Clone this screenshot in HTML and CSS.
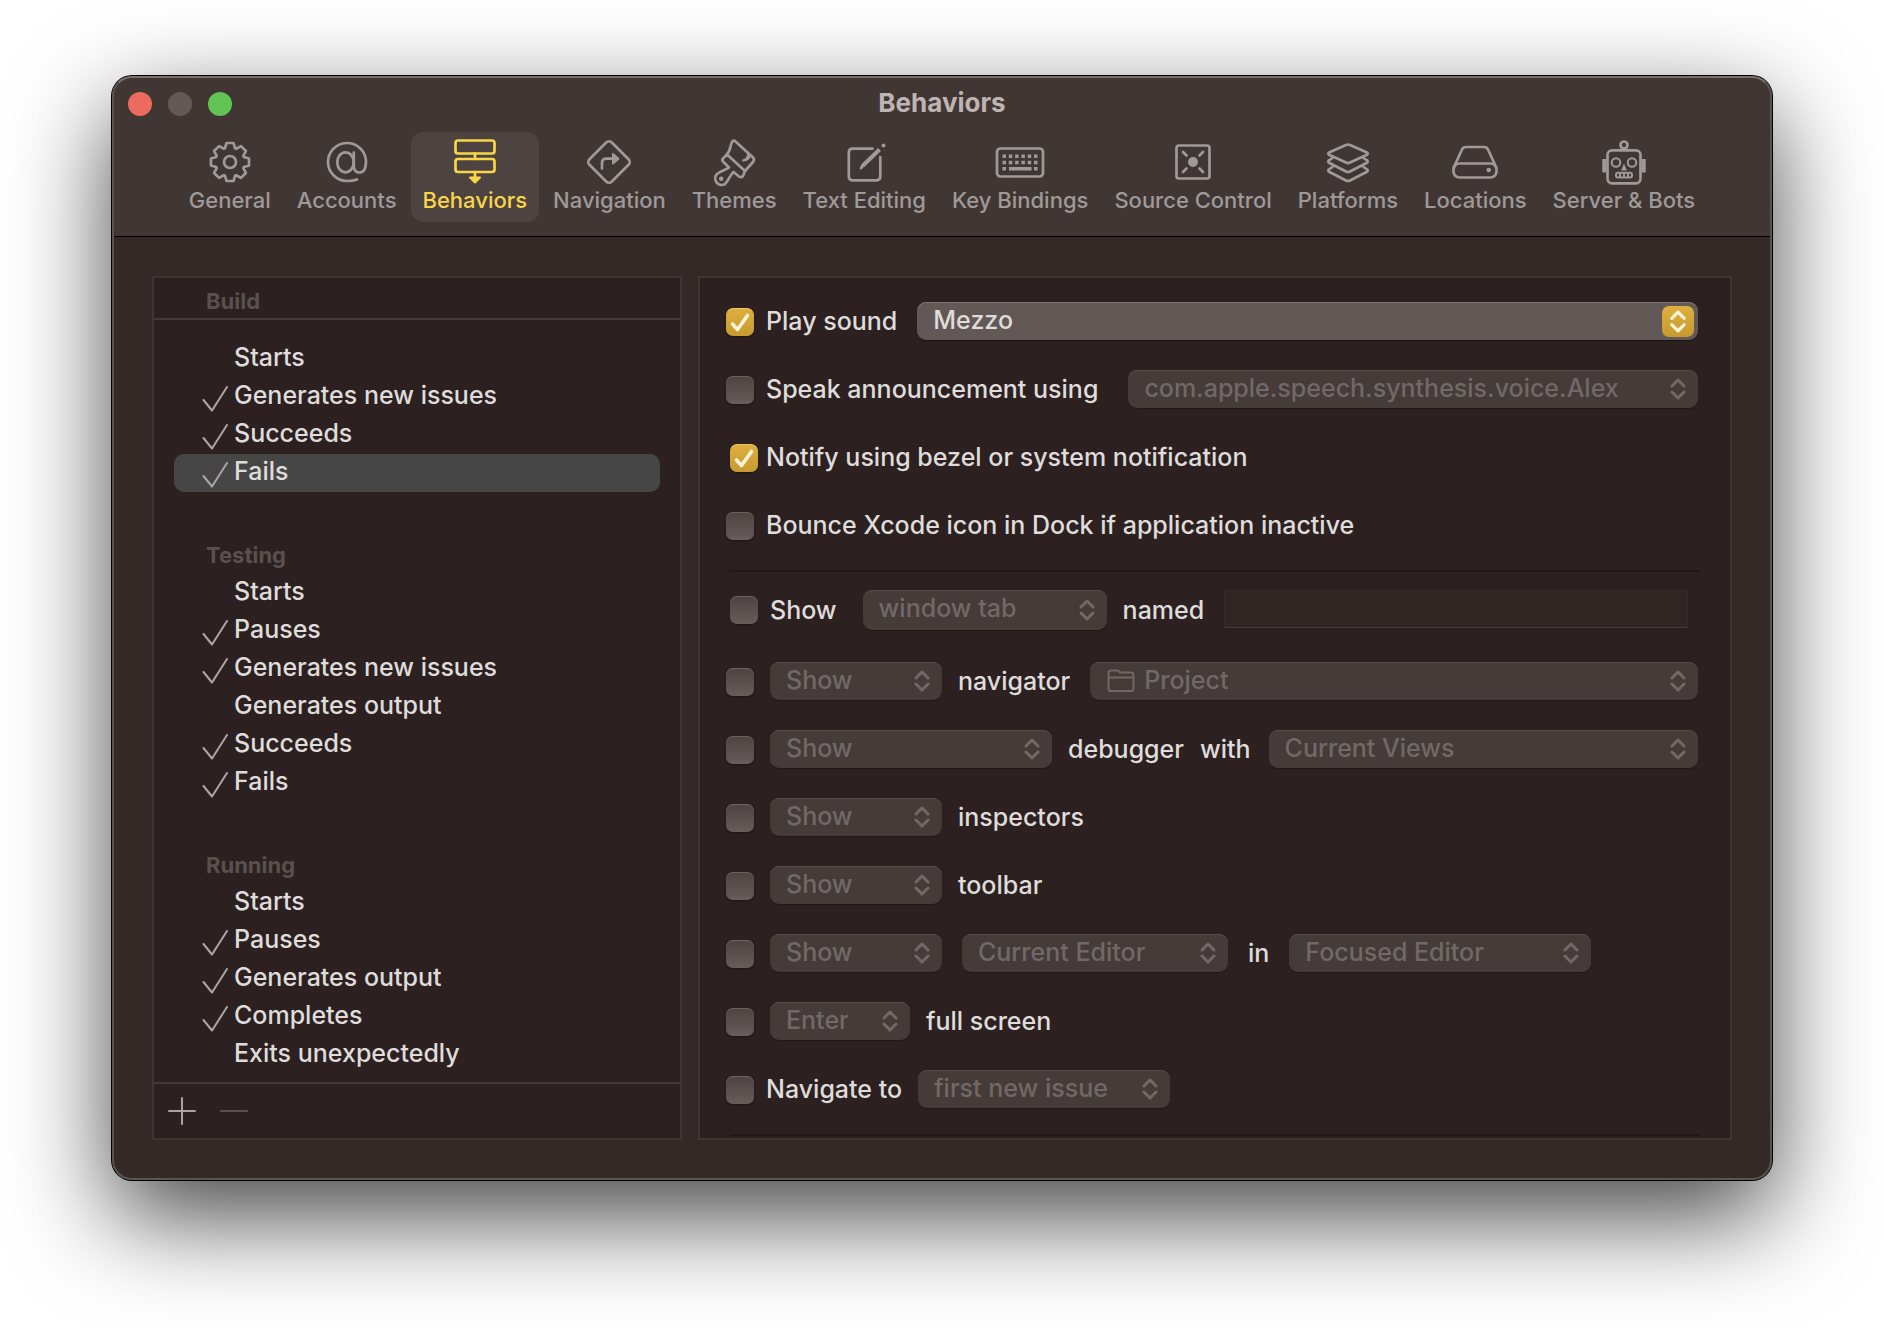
FILE: index.html
```html
<!DOCTYPE html>
<html lang="en">
<head>
<meta charset="utf-8">
<title>Behaviors</title>
<link rel="stylesheet" href="styles.css">
</head>
<body>
<svg class="sprite" aria-hidden="true">
  <symbol id="updown" viewBox="0 0 16 24"><path d="M2 9 8 3l6 6M2 15l6 6 6-6"/></symbol>
  <symbol id="tick" viewBox="0 0 26 26"><path d="M1.500 14 10 24.500 25 1"/></symbol>
</svg>
<main class="window">
  <header class="header">
    <div class="titlebar">
      <div class="lights">
        <button class="light close" type="button" aria-label="Close"></button>
        <button class="light minimize" type="button" aria-label="Minimize" disabled></button>
        <button class="light expand" type="button" aria-label="Zoom"></button>
      </div>
      <h1 class="title">Behaviors</h1>
    </div>
    <nav class="toolbar">
      <button class="tool" type="button">
        <svg class="tool-icon" viewBox="-25 -25 50 50"><path d="M-5-13.800-3.500-19H3.500L5-13.800 6.200-13.300 10.960-15.900 15.900-10.960 13.300-6.200 13.800-5 19-3.500V3.500L13.800 5 13.300 6.200 15.900 10.960 10.960 15.900 6.200 13.300 5 13.800 3.500 19H-3.500L-5 13.800-6.200 13.300-10.960 15.900-15.900 10.960-13.300 6.200-13.800 5-19 3.500V-3.500L-13.800-5-13.300-6.200-15.900-10.960-10.960-15.900-6.200-13.300Z"/><circle r="6"/></svg>
        <span>General</span>
      </button>
      <button class="tool" type="button">
        <svg class="tool-icon" viewBox="-25 -25 50 50"><path d="M10 17.500C7 18.700 3.500 19 0 19A19 19 0 1 1 19-1C19 7 16.500 10.500 12.500 10.500 9 10.500 6.800 8 6.800 4V-9.500"/><ellipse cx="-1.500" cy=".3" rx="8.200" ry="10"/></svg>
        <span>Accounts</span>
      </button>
      <button class="tool active" type="button" aria-current="page">
        <svg class="tool-icon" viewBox="0 0 50 50"><rect x="5.500" y="3.500" width="39" height="13" rx="2.500"/><rect x="5.500" y="22" width="39" height="13" rx="2.500"/><path d="M25 16.500V22M25 35v5"/><path class="solid" d="M20 40.500H30L25 45.500Z"/></svg>
        <span>Behaviors</span>
      </button>
      <button class="tool" type="button">
        <svg class="tool-icon" viewBox="-25 -25 50 50"><rect x="-15.800" y="-15.800" width="31.600" height="31.600" rx="4" transform="rotate(45)"/><path d="M-7 6.500V1Q-7-3.300-2.500-3.300H4"/><path class="solid" d="M4-8V1.500L9.500-3.200Z"/></svg>
        <span>Navigation</span>
      </button>
      <button class="tool" type="button">
        <svg class="tool-icon" viewBox="-25 -25 50 50"><path d="M-7-8C-3.500-11-4-16-2-20Q-.5-22.500 1.500-20.500L19-4.500Q21-2.500 19 0L11 9"/><path d="M-7-7.500-11-3.500Q-12.500-2-11-.5L-5 5.500C-8 8-14 9-17.500 12.500A6.500 6.500 0 0 0-9 22C-5 18-4 13-.5 10L5 14.500Q7 16 9 14L11 9-7-7.500"/><circle class="dot" cx="-12.800" cy="16.800" r="2.300"/><path class="solid" d="M16-6Q14-1.500 9-1.500 14-3 14-8Z"/></svg>
        <span>Themes</span>
      </button>
      <button class="tool" type="button">
        <svg class="tool-icon" viewBox="-25 -25 50 50"><path d="M8.500-13.300H-11.500Q-15.200-13.300-15.200-9.500V14.500Q-15.200 18.300-11.500 18.300H12.500Q16.300 18.300 16.300 14.500V-5"/><path class="pen" d="M-1.500 4 15.500-12.500"/><path d="M-3 6.200-1 3"/><circle class="dot" cx="19.500" cy="-16.500" r="2"/></svg>
        <span>Text Editing</span>
      </button>
      <button class="tool" type="button">
        <svg class="tool-icon" viewBox="-25 -25 50 50"><rect x="-23" y="-13.500" width="46" height="28" rx="3.500"/><path class="keys" d="M-17.500-5.700H19M-17.500.5H19"/><path class="bar" d="M-17.500 6.700h3.500M-11 6.700H11.500M14 6.700H17.500"/></svg>
        <span>Key Bindings</span>
      </button>
      <button class="tool" type="button">
        <svg class="tool-icon" viewBox="-25 -25 50 50"><rect x="-16.500" y="-16.500" width="33" height="33" rx="2.500"/><circle class="dot" r="5"/><path d="M-10-10-6.500-6.500M10-10 6.500-6.500M-10 10-6.500 6.500M10 10 6.500 6.500"/></svg>
        <span>Source Control</span>
      </button>
      <button class="tool" type="button">
        <svg class="tool-icon" viewBox="-25 -25 50 50"><path d="M-2-17Q0-18 2-17L18.500-9.800Q21-8.500 18.500-7L2 .6Q0 1.500-2 .6L-18.500-7Q-21-8.500-18.500-9.800Z"/><path d="M-15.500-4-18.500-2Q-21-.5-18.500 1L-2 9.500Q0 10.500 2 9.500L18.500 1Q21-.5 18.500-2L15.500-4"/><path d="M-15.500 5-18.500 7Q-21 8.500-18.500 10L-2 18.500Q0 19.500 2 18.500L18.500 10Q21 8.500 18.500 7L15.500 5"/></svg>
        <span>Platforms</span>
      </button>
      <button class="tool" type="button">
        <svg class="tool-icon" viewBox="-25 -25 50 50"><path d="M-21 5-13-12.500Q-12-15-9-15H9Q12-15 13-12.500L21 5"/><rect x="-21.500" y="1.500" width="43" height="14" rx="6"/><circle class="dot" cx="13.700" cy="8" r="2.300"/></svg>
        <span>Locations</span>
      </button>
      <button class="tool" type="button">
        <svg class="tool-icon" viewBox="-25 -25 50 50"><circle cx="0" cy="-17" r="3.500"/><path class="solid" d="M-4-12Q0-15 4-12Z"/><rect x="-16.500" y="-11.700" width="33" height="33" rx="4.500"/><path class="ears" d="M-19.700-3V10.500M19.700-3V10.500"/><circle class="thin" cx="-8" cy=".5" r="4.300"/><circle class="thin" cx="8" cy=".5" r="4.300"/><path class="dot" d="M0 1.500 3 8.500H-3Z"/><rect class="thin" x="-8" y="10.800" width="16" height="4.600" rx="2"/><path class="thin" d="M-4 11v4M0 11v4M4 11v4"/></svg>
        <span>Server &amp; Bots</span>
      </button>
    </nav>
  </header>

  <div class="content">
    <aside class="panel sidebar">
      <h2 class="group-title pinned">Build</h2>
      <div class="groups">
        <ul class="events">
          <li class="event">Starts</li>
          <li class="event"><svg class="tick"><use href="#tick"/></svg>Generates new issues</li>
          <li class="event"><svg class="tick"><use href="#tick"/></svg>Succeeds</li>
          <li class="event selected"><svg class="tick"><use href="#tick"/></svg>Fails</li>
        </ul>
        <h2 class="group-title">Testing</h2>
        <ul class="events">
          <li class="event">Starts</li>
          <li class="event"><svg class="tick"><use href="#tick"/></svg>Pauses</li>
          <li class="event"><svg class="tick"><use href="#tick"/></svg>Generates new issues</li>
          <li class="event">Generates output</li>
          <li class="event"><svg class="tick"><use href="#tick"/></svg>Succeeds</li>
          <li class="event"><svg class="tick"><use href="#tick"/></svg>Fails</li>
        </ul>
        <h2 class="group-title">Running</h2>
        <ul class="events">
          <li class="event">Starts</li>
          <li class="event"><svg class="tick"><use href="#tick"/></svg>Pauses</li>
          <li class="event"><svg class="tick"><use href="#tick"/></svg>Generates output</li>
          <li class="event"><svg class="tick"><use href="#tick"/></svg>Completes</li>
          <li class="event">Exits unexpectedly</li>
        </ul>
      </div>
      <div class="actions">
        <button class="action" type="button" aria-label="Add behavior"><svg viewBox="0 0 28 28"><path d="M1 14H27M14 1V27"/></svg></button>
        <button class="action" type="button" aria-label="Remove behavior" disabled><svg viewBox="0 0 28 28"><path d="M1 14H27"/></svg></button>
      </div>
    </aside>

    <form class="panel settings">
      <div class="row">
        <input class="check" type="checkbox" id="play" checked>
        <label class="label" for="play">Play sound</label>
        <span class="popup enabled fill after-label"><select aria-label="Sound"><option>Mezzo</option></select><svg><use href="#updown"/></svg></span>
      </div>
      <div class="row">
        <input class="check" type="checkbox" id="speak">
        <label class="label" for="speak">Speak announcement using</label>
        <span class="popup fill after-speak"><select aria-label="Voice" disabled><option>com.apple.speech.synthesis.voice.Alex</option></select><svg><use href="#updown"/></svg></span>
      </div>
      <div class="row">
        <input class="check inset" type="checkbox" id="notify" checked>
        <label class="label" for="notify">Notify using bezel or system notification</label>
      </div>
      <div class="row">
        <input class="check" type="checkbox" id="bounce">
        <label class="label" for="bounce">Bounce Xcode icon in Dock if application inactive</label>
      </div>
      <hr class="rule">
      <div class="row tab-row">
        <input class="check inset" type="checkbox" id="show-tab">
        <label class="label wide-start" for="show-tab">Show</label>
        <span class="popup tab-kind"><select aria-label="Window kind" disabled><option>window tab</option></select><svg><use href="#updown"/></svg></span>
        <label class="label trailing" for="tab-name">named</label>
        <input class="name" type="text" id="tab-name" disabled>
      </div>
      <div class="row">
        <input class="check" type="checkbox" id="navigator">
        <span class="popup verb"><select aria-label="Navigator action" disabled><option>Show</option></select><svg><use href="#updown"/></svg></span>
        <label class="label trailing" for="navigator">navigator</label>
        <span class="popup fill with-icon after-trailing"><select aria-label="Navigator" disabled><option>Project</option></select><svg><use href="#updown"/></svg><svg class="folder" viewBox="0 0 28 24"><path d="M1.500 5V19.500Q1.500 22 4 22H24Q26.500 22 26.500 19.500V6Q26.500 3.500 24 3.500H13L10.500 1.500H4Q1.500 1.500 1.500 4ZM1.500 8.500H26.500"/></svg></span>
      </div>
      <div class="row">
        <input class="check" type="checkbox" id="debugger">
        <span class="popup verb-wide"><select aria-label="Debugger action" disabled><option>Show</option></select><svg><use href="#updown"/></svg></span>
        <label class="label trailing" for="debugger">debugger</label>
        <label class="label trailing" for="views">with</label>
        <span class="popup fill after-with"><select id="views" disabled><option>Current Views</option></select><svg><use href="#updown"/></svg></span>
      </div>
      <div class="row">
        <input class="check" type="checkbox" id="inspectors">
        <span class="popup verb"><select aria-label="Inspectors action" disabled><option>Show</option></select><svg><use href="#updown"/></svg></span>
        <label class="label trailing" for="inspectors">inspectors</label>
      </div>
      <div class="row">
        <input class="check" type="checkbox" id="toolbar">
        <span class="popup verb"><select aria-label="Toolbar action" disabled><option>Show</option></select><svg><use href="#updown"/></svg></span>
        <label class="label trailing" for="toolbar">toolbar</label>
      </div>
      <div class="row">
        <input class="check" type="checkbox" id="editor" aria-label="Editor">
        <span class="popup verb"><select aria-label="Editor action" disabled><option>Show</option></select><svg><use href="#updown"/></svg></span>
        <span class="popup editor after-trailing"><select aria-label="Editor kind" disabled><option>Current Editor</option></select><svg><use href="#updown"/></svg></span>
        <label class="label after-label" for="target">in</label>
        <span class="popup target after-label"><select id="target" disabled><option>Focused Editor</option></select><svg><use href="#updown"/></svg></span>
      </div>
      <div class="row">
        <input class="check" type="checkbox" id="full">
        <span class="popup verb-short"><select aria-label="Full screen action" disabled><option>Enter</option></select><svg><use href="#updown"/></svg></span>
        <label class="label trailing" for="full">full screen</label>
      </div>
      <div class="row">
        <input class="check" type="checkbox" id="navigate">
        <label class="label" for="navigate">Navigate to</label>
        <span class="popup issue trailing"><select aria-label="Destination" disabled><option>first new issue</option></select><svg><use href="#updown"/></svg></span>
      </div>
      <hr class="rule">
    </form>
  </div>
</main>
</body>
</html>
```
FILE: styles.css
```css
* {
  box-sizing: border-box;
}

body {
  margin: 0;
  padding: 76px 112px 148px;
  background: #fff;
  color: #dfdcdb;
  font: 500 25px/38px Inter, "Liberation Sans", sans-serif;
}

button, input, select {
  margin: 0;
  padding: 0;
  border: 0;
  background: none;
  color: inherit;
  font: inherit;
}

h1, h2, ul {
  margin: 0;
  padding: 0;
  list-style: none;
}

svg {
  fill: none;
  stroke: currentColor;
  stroke-linecap: round;
  stroke-linejoin: round;
}

.sprite {
  display: none;
}

.window {
  position: relative;
  border-radius: 20px;
  background: #342927;
  box-shadow: 0 0 0 1px #000, 0 36px 100px rgba(0, 0, 0, .74);
}

/* Light rim drawn over the header and content edges */
.window::after {
  content: "";
  position: absolute;
  inset: 0;
  border: 2px solid #5c5250;
  border-top-color: #78716d;
  border-radius: 20px;
  pointer-events: none;
}

.header {
  padding-bottom: 14px;
  border-bottom: 1px solid #000;
  border-radius: 20px 20px 0 0;
  background: #403735;
}

.titlebar {
  display: grid;
  grid-template-columns: 1fr auto 1fr;
  align-items: center;
  height: 56px;
  padding: 0 16px;
}

.lights {
  display: flex;
  gap: 16px;
}

.light {
  width: 24px;
  height: 24px;
  border-radius: 50%;
}

.close { background: #ed6a5e; }
.minimize { background: #635a58; }
.expand { background: #61c554; }

.title {
  padding-bottom: 2px;
  color: #bfb4b2;
  font-size: 26px;
  font-weight: 700;
}

.toolbar {
  display: flex;
  justify-content: center;
  gap: 2px;
}

.tool {
  display: flex;
  flex-direction: column;
  align-items: center;
  height: 90px;
  padding: 5px 12px 9px;
  border-radius: 12px;
  color: #9f9998;
  font-size: 22px;
  line-height: 26px;
  white-space: nowrap;
}

.tool.active {
  background: #4d4442;
  color: #f9d548;
}

.tool-icon {
  width: 50px;
  height: 50px;
  stroke-width: 2.7;
}

.solid {
  fill: currentColor;
  stroke-width: 2;
}

.dot {
  fill: currentColor;
  stroke: none;
}

.pen { stroke-width: 4; stroke-linecap: butt; }
.keys { stroke-width: 3.5; stroke-linecap: butt; stroke-dasharray: 3.5 2.8; }
.bar { stroke-width: 3.5; stroke-linecap: butt; }
.ears { stroke-width: 4; stroke-linecap: butt; }
.thin { stroke-width: 2; }

.content {
  display: grid;
  grid-template-columns: 530fr 1034fr;
  gap: 16px;
  padding: 39px 40px 40px;
}

.panel {
  min-width: 0;
  overflow: hidden;
  border: 2px solid #3f3533;
  background: #2c2120;
}

.sidebar {
  display: flex;
  flex-direction: column;
}

.groups {
  flex: 1;
  padding: 20px 20px 8px;
}

.group-title {
  height: 38px;
  margin-top: 44px;
  padding-left: 32px;
  color: #5a504e;
  font-size: 22px;
  font-weight: 700;
}

.group-title.pinned {
  height: 42px;
  margin: 0;
  padding: 4px 0 0 52px;
  border-bottom: 2px solid #433937;
}

.event {
  display: grid;
  grid-template-columns: 26px 1fr;
  column-gap: 6px;
  height: 38px;
  padding-left: 28px;
  border-radius: 10px;
  line-height: 34px;
}

.event:not(:has(.tick)) {
  padding-left: 60px;
  grid-template-columns: 1fr;
}

.event.selected {
  background: #464646;
}

.tick {
  width: 26px;
  height: 26px;
  margin-top: 8px;
  color: #aca6a4;
  stroke-width: 2;
}

.actions {
  display: flex;
  gap: 24px;
  height: 56px;
  padding: 13px 14px;
  border-top: 2px solid #433937;
}

.action {
  width: 28px;
  height: 28px;
  color: #aaa4a2;
}

.action svg {
  display: block;
  stroke-width: 2;
}

.action:disabled {
  color: #5a504e;
}

.settings {
  display: flex;
  flex-direction: column;
  padding: 24px 30px 2px 26px;
}

.row {
  display: flex;
  height: 38px;
  padding-right: 2px;
}

.row + .row {
  margin-top: 30px;
}

.row.tab-row + .row {
  margin-top: 34px;
}

.row.tab-row {
  padding-right: 12px;
  line-height: 40px;
}

.rule {
  flex: none;
  height: 2px;
  margin: 26px 0 18px 4px;
  border: 0;
  background: #211817;
}

.rule:last-child {
  margin-bottom: 0;
}

.check {
  appearance: none;
  flex: none;
  width: 28px;
  height: 28px;
  margin: 6px 16px 0 0;
  border-radius: 7px;
  background: linear-gradient(#4c4341, #675e5c);
  box-shadow: inset 0 1px #6b6260, 0 1px 2px rgba(0, 0, 0, .4);
}

.check.inset {
  margin-left: 4px;
  margin-right: 12px;
}

.check:checked {
  background: url("data:image/svg+xml,%3Csvg xmlns='http://www.w3.org/2000/svg' viewBox='0 0 28 28'%3E%3Cpath d='M6.500 16 11.500 21.500 21.500 7.500' fill='none' stroke='%23fdf3d8' stroke-width='3.600' stroke-linecap='round' stroke-linejoin='round'/%3E%3C/svg%3E"), linear-gradient(#dfb03f, #c79a30);
  box-shadow: inset 0 1px #ecc768, 0 1px 2px rgba(0, 0, 0, .4);
}

.label {
  margin-left: -4px;
  white-space: nowrap;
}

.label.wide-start {
  margin-left: 0;
}

.trailing {
  margin-left: 16px;
}

.after-label,
.after-trailing {
  margin-left: 20px;
}

.after-with {
  margin-left: 18px;
}

.after-speak {
  margin-left: 30px;
}

.popup {
  display: grid;
  grid-template-columns: minmax(0, 1fr);
  flex: none;
  border-radius: 9px;
  background: #453b39;
  box-shadow: inset 0 1px #564c4a, 0 1px 1px rgba(0, 0, 0, .3);
  color: #716967;
}

.popup.fill {
  flex: 1;
  min-width: 0;
}

.popup > * {
  grid-area: 1 / 1;
}

.popup select {
  appearance: none;
  height: 35px;
  padding: 0 44px 0 16px;
  line-height: 34px;
  opacity: 1;
}

.popup svg {
  align-self: center;
  justify-self: end;
  width: 16px;
  height: 24px;
  margin-right: 12px;
  stroke-width: 3;
  pointer-events: none;
}

.popup.with-icon select {
  padding-left: 54px;
}

.popup .folder {
  justify-self: start;
  width: 28px;
  margin-left: 17px;
  stroke-width: 2;
}

.popup.enabled {
  background: #625956;
  box-shadow: inset 0 1px #7d7471, 0 1px 1px rgba(0, 0, 0, .4);
  color: #dfdcdb;
}

.popup.enabled svg {
  width: 32px;
  height: 31px;
  margin-right: 4px;
  padding: 3px 7px;
  border-radius: 7px;
  background: linear-gradient(#dfb03f, #c79a30);
  color: #fdf3d8;
}

.tab-kind { width: 244px; height: 40px; margin-left: 26px; }
.verb { width: 172px; }
.verb-wide { width: 282px; }
.verb-short { width: 140px; }
.editor { width: 266px; }
.target { width: 302px; }
.issue { width: 252px; }

.name {
  flex: 1;
  min-width: 0;
  height: 38px;
  margin-left: 20px;
  padding: 0 8px;
  border: 1px solid #372c2a;
  border-bottom-color: #463c3a;
  background: #312624;
}
```
